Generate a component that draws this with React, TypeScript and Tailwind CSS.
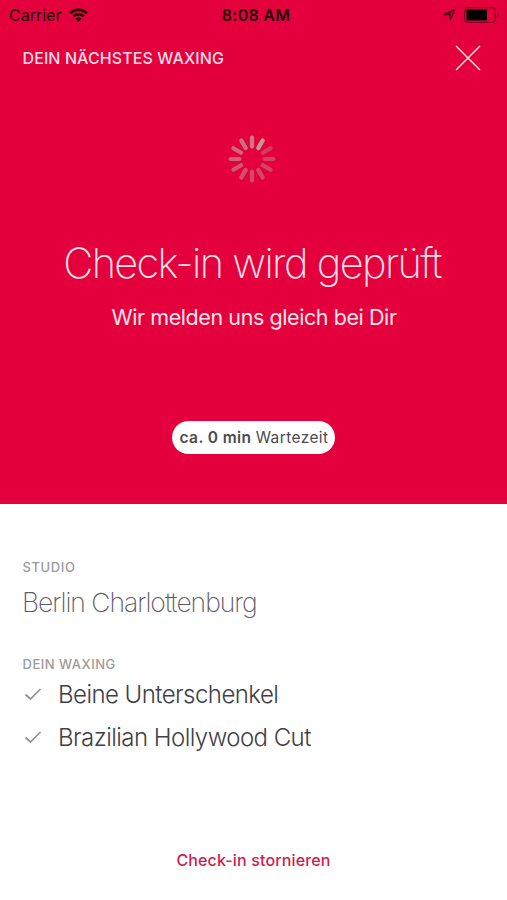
const treatments = ['Beine Unterschenkel', 'Brazilian Hollywood Cut'];

// Opacity of each spinner bar, clockwise from 12 o'clock
const spinnerBars = [0.8, 1, 0.38, 0.42, 0.44, 0.46, 0.48, 0.52, 0.58, 0.64, 0.68, 0.72];

function StatusBar() {
  return (
    <div className="grid h-[30px] grid-cols-3 items-center pl-[9px] pr-[7px] text-[#1c0008]">
      <div className="flex items-center gap-2">
        <span className="text-[16px]">Carrier</span>
        <svg width="19" height="14" viewBox="0 0 20 15" fill="none" stroke="currentColor" strokeWidth="2.7">
          <path d="M1.2 5.5a12.5 12.5 0 0 1 17.6 0" />
          <path d="M4.4 8.9a8 8 0 0 1 11.2 0" />
          <path d="M10 14.6 6.8 11.4a4.6 4.6 0 0 1 6.4 0Z" fill="currentColor" stroke="none" />
        </svg>
      </div>
      <span className="pl-[3px] text-center text-[16px] font-semibold tracking-[0.25px] whitespace-nowrap">8:08 AM</span>
      <div className="flex items-center justify-end gap-[8px]">
        <svg width="14" height="14" viewBox="0 0 14 14" opacity="0.8">
          <path d="M12.8 1.5 8 12.5V6.6H1.5Z" fill="none" stroke="currentColor" strokeWidth="1.1" />
          <path d="M12.8 1.5 8 6.6H1.5Z" fill="currentColor" fillOpacity="0.6" />
        </svg>
        <svg width="36" height="16" viewBox="0 0 36 16">
          <rect x="0.7" y="0.7" width="30.6" height="14.6" rx="2.6" fill="none" stroke="currentColor" strokeOpacity="0.6" />
          <rect x="2.5" y="2.5" width="20.5" height="11" rx="1" fill="#000" />
          <path d="M33 5.5v5q2-.7 2-2.5t-2-2.5Z" fill="currentColor" fillOpacity="0.5" />
        </svg>
      </div>
    </div>
  );
}

function Spinner() {
  return (
    <svg width="50" height="50" viewBox="-25 -25 50 50">
      {spinnerBars.map((opacity, i) => (
        <rect
          key={i}
          x="-2.1"
          y="-23.5"
          width="4.2"
          height="13"
          rx="2"
          fill="#c09a98"
          fillOpacity={opacity}
          transform={`rotate(${i * 30})`}
        />
      ))}
    </svg>
  );
}

function CheckIcon() {
  return (
    <svg className="mr-[14px]" width="22" height="22" viewBox="0 0 22 22" fill="none" stroke="#929296" strokeWidth="1.7">
      <path d="M3.500 10.500 8.500 15 18.500 5" />
    </svg>
  );
}

export default function App() {
  return (
    <div className="flex h-[900px] w-[507px] flex-col overflow-hidden bg-white font-[Inter,sans-serif]">
      <section className="flex h-[504px] shrink-0 flex-col bg-[#e4003c]">
        <StatusBar />
        <header className="flex h-14 items-center justify-between pl-[22.5px] pr-[26px] text-white">
          <h2 className="text-[16px] font-medium tracking-[0.1px] text-[#ffdce4]">DEIN NÄCHSTES WAXING</h2>
          <button aria-label="Schließen">
            <svg width="26" height="26" viewBox="0 0 26 26" fill="none" stroke="#ffdce4" strokeWidth="1.5">
              <path d="M1 1 25 25M25 1 1 25" />
            </svg>
          </button>
        </header>

        <div className="flex flex-col items-center pt-[48px] pr-[3px]">
          <Spinner />
        </div>
        <div className="flex flex-col items-center pt-[54px]">
          <h1 className="pr-[3px] text-[41.5px] leading-[50px] font-extralight tracking-[-1.65px] whitespace-nowrap text-[#ffe4ea]">
            Check-in wird geprüft
          </h1>
          <p className="mt-[16px] pl-px text-[21.5px] leading-[26px] tracking-[-0.42px] whitespace-nowrap text-[#ffe4ea]">
            Wir melden uns gleich bei Dir
          </p>
          <div className="mt-[91px] flex h-[33px] w-[163px] items-center justify-center rounded-full bg-white pt-px pl-px text-[15.5px] tracking-[0.4px] whitespace-pre text-[#4b4b50]">
            <span className="font-semibold">ca. 0 min </span>
            <span>Wartezeit</span>
          </div>
        </div>
      </section>

      <section className="flex flex-1 flex-col px-[22px] pt-[54px]">
        <h3 className="pl-[0.5px] text-[13px] leading-[18px] font-medium tracking-[0.6px] text-[#9b9b9b]">STUDIO</h3>
        <p className="mt-[9px] text-[26.5px] leading-[34px] font-extralight tracking-[-1.02px] text-[#5c5c64]">Berlin Charlottenburg</p>

        <h3 className="mt-[36px] pl-[0.5px] text-[13px] leading-[18px] font-medium tracking-[0.5px] text-[#9b9b9b]">DEIN WAXING</h3>
        <ul>
          {treatments.map((name) => (
            <li key={name} className="flex h-[43px] items-center">
              <CheckIcon />
              <span className="text-[24px] leading-[30px] font-light tracking-[-0.55px] whitespace-nowrap text-[#404046]">{name}</span>
            </li>
          ))}
        </ul>

        <button className="mt-auto mb-[28px] self-center text-[16px] leading-6 font-medium tracking-[0.15px] text-[#d11a4d]">
          Check-in stornieren
        </button>
      </section>
    </div>
  );
}
